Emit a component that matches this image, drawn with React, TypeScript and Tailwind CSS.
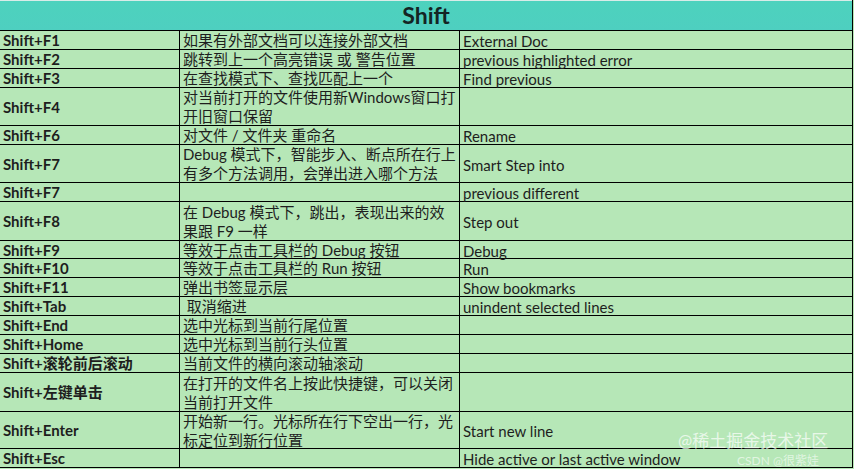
import React from 'react';

interface Row {
  key: string;
  desc: string;
  en: string;
  h: string;
}

const rows: Row[] = [
  { key: 'Shift+F1', desc: '如果有外部文档可以连接外部文档', en: 'External Doc', h: 'h-[19px]' },
  { key: 'Shift+F2', desc: '跳转到上一个高亮错误 或 警告位置', en: 'previous highlighted error', h: 'h-[19px]' },
  { key: 'Shift+F3', desc: '在查找模式下、查找匹配上一个', en: 'Find previous', h: 'h-[19px]' },
  { key: 'Shift+F4', desc: '对当前打开的文件使用新Windows窗口打开旧窗口保留', en: '', h: 'h-[38px]' },
  { key: 'Shift+F6', desc: '对文件 / 文件夹 重命名', en: 'Rename', h: 'h-[19px]' },
  { key: 'Shift+F7', desc: 'Debug 模式下，智能步入、断点所在行上有多个方法调用，会弹出进入哪个方法', en: 'Smart Step into', h: 'h-[38px]' },
  { key: 'Shift+F7', desc: '', en: 'previous different', h: 'h-[19px]' },
  { key: 'Shift+F8', desc: '在 Debug 模式下，跳出，表现出来的效果跟 F9 一样', en: 'Step out', h: 'h-[39px]' },
  { key: 'Shift+F9', desc: '等效于点击工具栏的 Debug 按钮', en: 'Debug', h: 'h-[18px]' },
  { key: 'Shift+F10', desc: '等效于点击工具栏的 Run 按钮', en: 'Run', h: 'h-[19px]' },
  { key: 'Shift+F11', desc: '弹出书签显示层', en: 'Show bookmarks', h: 'h-[19px]' },
  { key: 'Shift+Tab', desc: ' 取消缩进', en: 'unindent selected lines', h: 'h-[19px]' },
  { key: 'Shift+End', desc: '选中光标到当前行尾位置', en: '', h: 'h-[19px]' },
  { key: 'Shift+Home', desc: '选中光标到当前行头位置', en: '', h: 'h-[19px]' },
  { key: 'Shift+滚轮前后滚动', desc: '当前文件的横向滚动轴滚动', en: '', h: 'h-[19px]' },
  { key: 'Shift+左键单击', desc: '在打开的文件名上按此快捷键，可以关闭当前打开文件', en: '', h: 'h-[39px]' },
  { key: 'Shift+Enter', desc: '开始新一行。光标所在行下空出一行，光标定位到新行位置', en: 'Start new line', h: 'h-[37px]' },
  { key: 'Shift+Esc', desc: '', en: 'Hide active or last active window', h: 'h-[19px]' },
];

const font = "font-['Lato','Noto_Sans_CJK_SC',sans-serif]";

export default function App() {
  return (
    <div className={`relative w-[854px] h-[469px] bg-[#b6e7b7] overflow-hidden text-[#1e1e1e] ${font}`}>
      <div className="w-[853px] border-r border-black">
        <div className="h-[31px] border-t border-t-[#d9ece8] border-b border-b-black bg-gradient-to-b from-[#4dd2bd] to-[#4ecfc0] flex items-center justify-center">
          <span className="text-[23px] font-bold text-[#142424] leading-none">Shift</span>
        </div>
        {rows.map((r, i) => (
          <div key={i} className={`flex ${r.h} border-b border-black text-[15px] leading-[19px]`}>
            <div className="w-[180px] shrink-0 border-r border-black pl-[3px] pt-[1px] flex items-center font-bold whitespace-nowrap">
              {r.key}
            </div>
            <div className="w-[280px] shrink-0 border-r border-black pl-[3px] pr-[2px] pt-[1px] flex items-center">
              <span className="block whitespace-pre-wrap break-all">{r.desc}</span>
            </div>
            <div className="flex-1 pl-[3px] flex items-center pt-[3px] whitespace-nowrap">
              {r.en}
            </div>
          </div>
        ))}
      </div>
      <div className="absolute left-[678px] top-[432px] text-[17px] leading-[18px] text-white/70 whitespace-nowrap">
        @稀土掘金技术社区
      </div>
      <div className="absolute left-[737px] top-[454px] text-[12px] leading-[13px] text-white/60 whitespace-nowrap">
        CSDN @很紫娃
      </div>
    </div>
  );
}
